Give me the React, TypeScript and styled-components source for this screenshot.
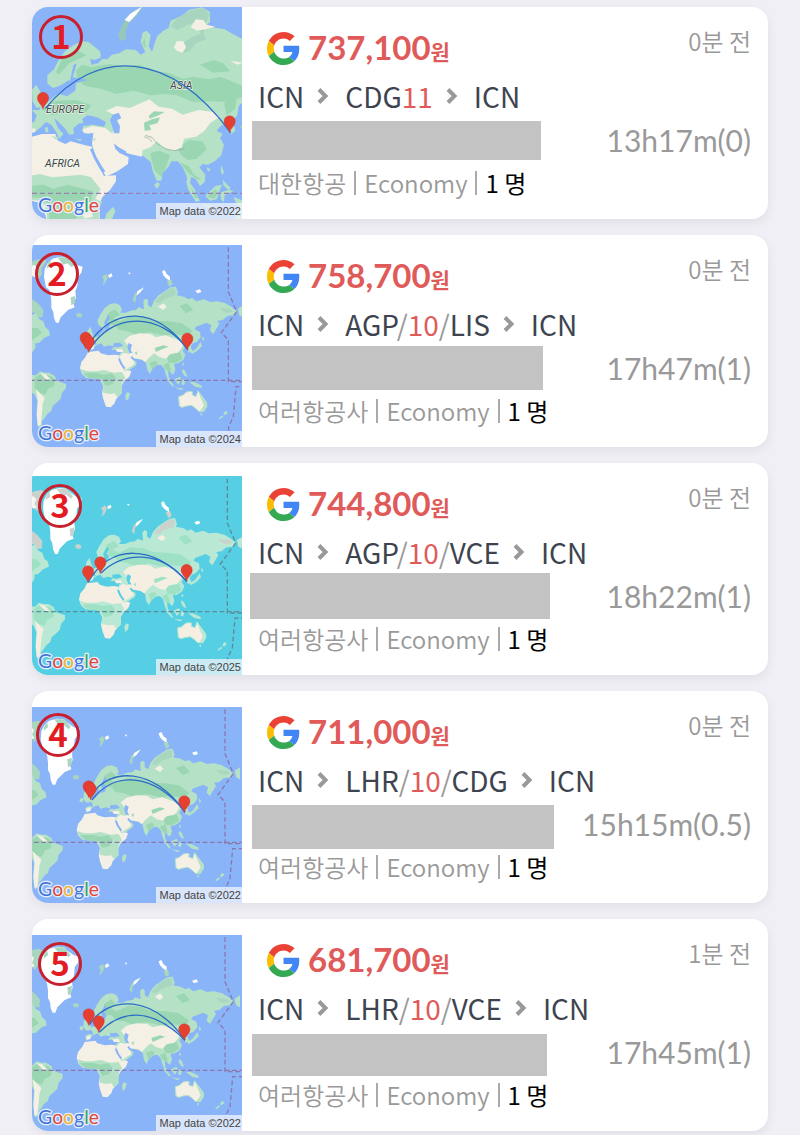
import React from 'react';
import styled, { createGlobalStyle } from 'styled-components';

const GlobalStyle = createGlobalStyle`
  * { box-sizing: border-box; }
  body { margin: 0; background: #f0eff5; font-family: "Noto Sans CJK KR", "Noto Sans", sans-serif; }
  ul { margin: 0; padding: 0; list-style: none; }
`;

const List = styled.ul`
  display: flex;
  flex-direction: column;
  gap: 16px;
  padding: 7px 32px 4px;
`;

const Card = styled.li`
  position: relative;
  display: flex;
  min-height: 212px;
  background: #fff;
  border-radius: 16px;
  overflow: hidden;
  box-shadow: 0 4px 10px rgba(60, 60, 90, 0.08);
`;

const MapFrame = styled.div`
  position: relative;
  flex: none;
  align-self: flex-end;
  width: 210px;
  svg { display: block; width: 100%; }
`;

const Attribution = styled.span`
  position: absolute;
  right: 0;
  bottom: 0;
  padding: 0 1px 0 3px;
  background: rgba(240, 245, 250, 0.76);
  color: #444;
  font: 11px/16px "Liberation Sans", sans-serif;
  white-space: nowrap;
`;

const Badge = styled.span<{ $x: number; $y: number }>`
  position: absolute;
  left: ${p => p.$x}px;
  top: ${p => p.$y}px;
  display: flex;
  align-items: center;
  justify-content: center;
  width: 44px;
  height: 44px;
  padding-bottom: 5px;
  border: 3px solid #c8202f;
  border-radius: 50%;
  color: #e31b23;
  font-size: 33px;
  line-height: 38px;
  font-weight: 700;
`;

const Body = styled.div`
  flex: 1;
  min-width: 0;
  display: flex;
  flex-direction: column;
  padding: 16px 17px 15px 16px;
`;

const Row = styled.div`
  display: flex;
  align-items: center;
  justify-content: space-between;
`;

const PriceRow = styled(Row)`
  height: 50px;
  padding-left: 9px;
`;

const Price = styled.strong`
  display: flex;
  align-items: center;
  gap: 8px;
  color: #e05a5a;
  font: 700 33px/44px Lato, sans-serif;
  svg { width: 33px; height: 33px; }
  small { font: 700 21px/40px "Noto Sans CJK KR", sans-serif; }
`;

const Ago = styled.time`
  align-self: flex-start;
  color: #999;
  font-size: 24px;
  line-height: 36px;
  font-weight: 350;
`;

const Route = styled.div`
  display: flex;
  align-items: center;
  height: 46px;
  color: #3e444f;
  font-size: 28px;
  line-height: 46px;
  white-space: nowrap;
  em { color: #e05a5a; font-style: normal; }
  i { color: #999; font-style: normal; }
  svg { width: 14px; height: 18px; margin: 0 15px 0 12px; }
`;

const DurationRow = styled(Row)`
  height: 47px;
  margin-top: -2px;
  align-items: flex-start;
`;

const Masked = styled.div<{ $w: number; $h: number; $top: number; $shift: number }>`
  width: ${p => p.$w}px;
  height: ${p => p.$h}px;
  margin: ${p => p.$top}px 0 0 -${p => p.$shift}px;
  background: #c3c3c3;
`;

const Duration = styled.span`
  color: #999;
  font: 30px/46px Lato, sans-serif;
`;

const Details = styled.div`
  display: flex;
  align-items: center;
  gap: 8px;
  color: #999;
  font-size: 24px;
  font-weight: 350;
  line-height: 38px;
  white-space: nowrap;
  b { color: #000; font-weight: 400; }
`;

const Divider = styled.span`
  width: 2px;
  height: 24px;
  background: #aaa;
`;

const GoogleG = () => (
  <svg viewBox="0 0 48 48" aria-label="Google">
    <path fill="#EA4335" d="M24 9.5c3.54 0 6.71 1.22 9.21 3.6l6.85-6.85C35.9 2.38 30.47 0 24 0 14.62 0 6.51 5.38 2.56 13.22l7.98 6.19C12.43 13.72 17.74 9.5 24 9.5z" />
    <path fill="#4285F4" d="M46.98 24.55c0-1.57-.15-3.09-.38-4.55H24v9.02h12.94c-.58 2.96-2.26 5.48-4.78 7.18l7.73 6c4.51-4.18 7.09-10.36 7.09-17.65z" />
    <path fill="#FBBC05" d="M10.53 28.59c-.48-1.45-.76-2.99-.76-4.59s.27-3.14.76-4.59l-7.98-6.19C.92 16.46 0 20.12 0 24c0 3.88.92 7.54 2.56 10.78l7.97-6.19z" />
    <path fill="#34A853" d="M24 48c6.48 0 11.93-2.13 15.89-5.81l-7.73-6c-2.15 1.45-4.92 2.3-8.16 2.3-6.26 0-11.57-4.22-13.47-9.91l-7.98 6.19C6.51 42.62 14.62 48 24 48z" />
  </svg>
);

const Chevron = () => (
  <svg viewBox="0 0 14 18" aria-hidden="true">
    <path d="M3 2.500 9.500 9 3 15.500" fill="none" stroke="#999" strokeWidth="4" />
  </svg>
);

type Point = [number, number];

const Pin = ({ at: [x, y] }: { at: Point }) => (
  <path
    transform={`translate(${x} ${y})`}
    fill="#e53f31"
    stroke="#c5372c"
    d="M0 34C-2 20-17 14-17 0A17 17 0 0 1 17 0C17 14 2 20 0 34Z"
  />
);

const Wordmark = ({ y }: { y: number }) => (
  <text
    x="54" y={y} fontFamily="Lato, sans-serif" fontSize="58"
    stroke="#e6edf8" strokeWidth="8" strokeLinejoin="round" paintOrder="stroke"
  >
    <tspan fill="#3f76dd">G</tspan><tspan fill="#de453c">o</tspan><tspan fill="#efb32c">o</tspan>
    <tspan fill="#3f76dd">g</tspan><tspan fill="#3aa05a">l</tspan><tspan fill="#de453c">e</tspan>
  </text>
);

interface Palette { sea: string; land: string; forest: string; desert: string; tundra: string; line: string }

const CLASSIC: Palette = { sea: '#8ab4f8', land: '#b5e2c6', forest: '#9ad6b1', desert: '#f5f0e5', tundra: '#a9d6bf', line: '#8a78ad' };
const TEAL: Palette = { sea: '#56cee3', land: '#b9e8d4', forest: '#9fe1c4', desert: '#f4eee3', tundra: '#cbd2cd', line: '#5b8d98' };

const World = ({ c }: { c: Palette }) => (
  <g strokeLinejoin="round">
    {/* North America */}
    <path fill={c.tundra} d="M30 98 46 90 66 86 80 92 72 106 64 116 66 132 54 150 44 138 30 142Z" />
    <path fill="#f7f6f2" d="M30 112 42 104 52 114 46 128 54 138 44 142 30 132Z" />
    <path fill={c.tundra} d="M30 206 44 212 58 224 70 240 68 262 56 262 46 250 30 246Z" />
    <path fill={c.land} d="M30 256 48 250 58 268 70 274 76 292 86 300 90 316 72 324 58 338 46 340 46 354 30 376Z" />
    <path fill={c.forest} d="M30 294 54 294 66 310 48 322 30 336Z" />
    {/* Greenland */}
    <path fill="#fff" d="M72 142 74 118 84 98 98 86 120 80 142 82 152 92 172 106 188 110 184 128 174 142 172 168 166 184 168 204 160 220 164 232 144 240 132 252 122 262 116 278 108 278 102 264 100 246 94 234 94 212 92 196 88 180 78 172Z" />
    <path fill={c.tundra} d="M112 82 142 82 162 104 156 112 142 100 130 104ZM152 202 166 198 164 220 154 226ZM84 98 92 92 94 106 80 116Z" />
    <path fill={c.tundra} d="M168 252 178 248 188 254 184 262 172 262Z" />
    {/* South America */}
    <path fill={c.land} d="M30 434 48 436 60 424 74 428 88 428 104 438 110 452 138 462 138 474 126 488 122 506 112 516 98 528 94 542 82 552 74 564 66 574 66 584 56 592 52 586 50 544 52 512 44 494 30 482Z" />
    <path fill={c.forest} d="M44 444 60 432 94 438 106 450 102 468 84 476 76 494 58 488 44 474Z" />
    <path fill={c.desert} d="M48 478 60 490 74 504 68 522 66 548 62 584 54 588 50 556 54 514ZM60 430 76 432 92 448 80 450Z" />
    {/* Africa and Madagascar */}
    <path fill={c.desert} d="M204 366 236 362 242 370 264 376 284 374 298 376 310 396 316 418 334 424 328 440 312 454 304 470 304 490 288 508 284 520 272 532 258 530 250 508 246 490 250 468 244 456 236 442 216 442 200 444 186 432 180 414 184 396 196 382Z" />
    <path fill={c.land} d="M182 418 204 424 228 424 252 420 280 428 306 426 316 444 306 460 306 490 292 502 284 490 270 492 248 488 250 468 242 448 200 444 188 434Z" />
    <path fill={c.forest} d="M190 430 226 428 252 434 276 430 288 444 278 462 258 468 244 448 206 444Z" />
    <path fill={c.land} d="M322 486 330 490 326 506 318 512 316 496Z" />
    {/* Eurasia */}
    <path fill={c.land} d="M208 362 206 348 216 342 230 344 226 332 218 328 228 320 236 318 244 308 252 302 248 294 236 286 232 272 240 256 254 234 270 222 286 220 300 226 306 240 300 248 318 248 332 242 348 240 356 232 372 238 370 214 376 206 384 210 384 226 394 232 402 212 416 196 436 182 452 172 468 170 474 188 470 196 492 200 506 208 516 204 530 214 552 208 570 216 592 214 616 220 636 232 652 246 642 256 622 258 608 270 592 272 598 282 588 298 580 312 570 302 574 286 560 278 544 284 528 290 524 298 540 306 542 322 530 336 518 340 512 350 518 364 506 368 504 352 494 350 488 362 496 374 490 390 474 400 462 402 466 418 460 434 450 426 444 418 446 440 456 460 448 458 438 436 432 414 422 404 410 406 396 418 390 432 382 420 378 398 366 390 346 386 334 386 350 396 348 406 328 420 314 424 304 404 296 384 300 370 308 364 292 358 274 360 282 350 268 346 252 350 244 340 232 344 222 352Z" />
    <path fill={c.forest} d="M262 252 284 238 300 254 280 264 300 274 334 258 372 260 400 272 446 274 486 280 518 302 504 318 464 312 430 316 388 306 350 314 322 304 296 300 286 286 264 284ZM440 378 478 364 488 386 466 400 446 398ZM388 398 406 392 414 400 396 418ZM430 404 446 398 454 424 438 420ZM478 228 502 220 520 240 498 250Z" />
    <path fill={c.tundra} d="M404 216 428 190 454 174 466 176 466 196 436 206 418 220ZM596 234 630 236 640 246 616 248Z" />
    <path fill={c.desert} d="M312 332 328 318 358 310 392 312 408 322 436 316 464 326 490 336 486 352 474 368 450 372 438 386 420 382 402 370 386 384 376 396 364 388 338 384 344 402 316 420 304 398 298 380 310 368 330 372 326 348ZM414 230 430 220 440 230 430 240ZM286 358 306 356 310 366 292 366ZM208 350 222 346 222 356 212 360Z" />
    <path fill={c.sea} d="M264 256 270 262 262 276 270 286 264 300 252 302 256 286 252 278ZM326 338 336 344 332 360 338 370 328 368 322 352ZM280 340 300 338 310 348 292 352 280 350ZM242 344 252 352 260 366 252 368 238 354Z" />
    <path fill="none" stroke={c.sea} strokeWidth="6" d="M297 386 304 402 314 416M334 380 342 390" />
    <path fill={c.forest} d="M404 354 430 346 446 350 426 358 408 366ZM344 368 352 364 350 376Z" />
    <path fill={c.land} d="M206 330 200 318 202 302 212 290 216 306 224 324 216 332ZM192 318 202 320 196 332 188 328Z" />
    {/* Arctic islands */}
    <path fill={c.tundra} d="M246 140 258 132 264 142 256 158 248 166 252 150ZM338 210 344 192 356 180 372 174 360 186 348 200 346 218ZM440 152 454 150 458 164 448 170Z" />
    <path fill="#fff" d="M264 136 274 130 278 138 268 144ZM426 124 434 120 440 132 450 140 450 152 440 146 430 136ZM352 184 372 172 360 188 350 196ZM526 182 540 178 544 186 532 190ZM324 128 332 128 328 134Z" />
    {/* East Asia, Indonesia, Oceania */}
    <path fill={c.land} d="M546 318 554 328 548 332ZM542 336 546 348 532 362 516 372 512 366 528 356ZM578 288 584 300 578 310ZM488 396 494 404 488 408ZM488 416 496 424 502 440 494 438 486 426ZM440 446 456 458 464 470 456 468ZM464 448 480 440 484 450 474 464ZM488 450 498 448 492 466 484 462ZM464 472 492 476 482 480ZM508 456 522 456 544 466 546 474 526 470Z" />
    <path fill={c.desert} stroke={c.land} strokeWidth="3" d="M476 500 488 496 500 486 510 484 518 486 516 494 528 500 534 482 542 494 550 504 560 518 560 530 550 544 536 544 526 534 514 526 500 528 486 532 478 528Z" />
    <path fill={c.land} d="M534 484 544 498 558 514 562 528 552 546 540 544 552 526 544 508ZM540 550 548 550 544 558ZM616 542 624 548 614 556 610 552ZM608 556 610 560 598 568 596 564ZM654 236 670 226 670 262 658 256Z" />
    {/* Equator and date line */}
    <g fill="none" stroke={c.line} strokeWidth="4" strokeDasharray="14 8">
      <path d="M30 451H680" />
      <path d="M625 30V185L650 245 604 308 625 330V455H680M680 470H648L640 560 626 590V612" />
    </g>
  </g>
);

const EurasiaCloseUp = () => {
  const c = CLASSIC;
  return (
    <g strokeLinejoin="round">
      <rect x="30" y="10" width="650" height="660" fill={c.sea} />
      {/* Europe and Asia */}
      <path fill={c.land} d="M30 372 44 364 50 346 36 330 58 330 66 314 88 302 104 288 122 278 150 272 158 250 146 240 132 250 118 258 98 264 82 250 82 226 102 208 114 184 136 152 160 136 186 124 206 126 240 154 244 172 224 180 210 176 214 194 234 190 248 176 262 178 276 164 298 160 318 148 348 150 362 164 376 156 362 126 368 98 380 92 392 106 386 138 396 156 404 130 412 108 430 92 446 84 452 62 488 46 506 30 546 22 570 36 570 66 556 78 590 84 614 88 634 100 670 118V304L656 318 652 346 638 362 646 392 634 402 624 388 620 370 602 378 590 392 608 402 600 414 612 434 604 466 584 484 564 494 548 492 538 502 556 524 554 546 540 558 528 538 514 530 510 548 524 568 534 596 518 582 502 552 500 528 488 502 474 484 454 484 446 500 428 518 424 542 410 542 398 512 392 486 380 476 362 462 340 460 310 454 294 438 280 424 260 400 236 396 204 402 186 394 190 378 206 370 178 370 160 384 162 402 148 404 134 384 116 366 102 354 114 384 130 402 118 416 110 398 94 374 78 366 60 384 44 396 30 400Z" />
      <path fill={c.forest} d="M168 212 186 194 216 202 244 196 270 192 312 200 360 194 400 214 446 218 488 236 520 230 566 238 602 230 670 258V290L622 306 578 304 520 306 470 286 430 282 392 286 340 272 288 282 242 266 196 258 172 238ZM386 94 374 112 378 146 366 130ZM540 194 580 180 610 190 630 214 578 218ZM472 444 506 420 548 424 560 448 530 476 504 480 484 466ZM390 460 418 452 450 466 438 500 424 530 404 512ZM480 488 506 498 522 524 546 538 530 538 506 520ZM128 172 168 150 200 166 176 176 150 188 116 224 108 216ZM64 326 108 302 168 300 214 316 196 338 150 336 96 346ZM612 310 650 290 646 326 620 346Z" />
      <path fill="#a7d5bf" d="M452 78 470 56 506 34 548 24 570 42 556 70 526 66 500 76 470 90ZM488 130 516 112 548 98 560 116 528 130 508 154 486 160ZM536 92 556 82 548 106Z" />
      <path fill={c.desert} d="M512 82 528 58 550 60 560 74 586 80 556 88 532 92ZM462 142 470 124 490 124 498 142 488 158 470 152ZM258 332 290 318 330 324 356 312 388 298 416 320 456 326 488 344 536 330 580 336 600 350 570 370 552 394 528 410 492 416 486 442 460 452 430 442 410 424 392 442 368 450 366 470 330 462 296 452 278 430 240 398 192 400 188 388 218 378 256 384 278 402 280 372 302 354ZM30 396 40 384 48 388 42 398ZM630 182 670 188 652 194Z" />
      <path fill={c.forest} d="M386 348 402 334 434 336 416 346 390 356ZM372 368 396 358 420 352 412 370 388 376 394 390 374 392Z" />
      <path fill="none" stroke="#8fa99b" strokeWidth="2" d="M376 406 396 412 412 432 440 448 466 452 494 446M372 410 388 416 396 426" />
      {/* Africa */}
      <path fill={c.desert} d="M30 412 66 402 106 402 114 422 136 432 152 424 190 434 216 440 222 470 236 500 252 528 288 526 288 544 270 570 248 590 238 612 240 670H84L72 634 60 608 30 602Z" />
      <path fill={c.land} d="M30 528 60 522 96 532 142 528 182 524 214 532 242 568 226 596 246 606 236 626 240 670H84L76 618 58 602 30 600Z" />
      <path fill={c.forest} d="M30 558 70 554 100 566 142 554 190 566 218 574 212 606 178 612 166 670H90L84 610 56 592 30 594ZM218 612 238 608 236 640 218 644Z" />
      <path fill={c.desert} d="M180 604 202 600 216 620 218 650 194 656 180 630Z" />
      <path fill={c.land} d="M280 620 286 634 270 670H250L260 640Z" />
      {/* Arabia */}
      <path fill={c.desert} d="M220 400 250 390 276 408 284 438 298 458 326 472 324 492 292 514 258 530 244 504 226 470 216 432Z" />
      {/* Inner seas */}
      <path fill={c.sea} d="M160 196 170 190 164 214 158 232 186 236 204 240 182 246 168 250 166 272 142 288 122 284 132 262 148 252ZM186 358 202 346 216 348 236 354 258 366 252 380 218 374 194 378ZM278 344 296 338 304 354 290 360 300 378 298 400 282 400 276 378 270 360ZM282 430 296 442 318 454 320 462 300 460 286 446ZM240 168 258 158 262 174 248 178Z" />
      <path fill="none" stroke={c.sea} strokeWidth="9" d="M214 446 226 474 240 498 252 516" />
      <path fill={c.land} d="M50 324 38 304 36 270 48 254 62 276 68 302 72 318ZM74 384 82 380 86 394 78 398ZM94 408 116 412 110 420ZM164 416 186 418 180 422ZM216 418 228 414 224 422Z" />
      {/* Arctic and island chains */}
      <path fill="#96c7bb" d="M294 104 306 76 320 52 340 34 368 20 350 48 326 70 318 92 318 116 302 124Z" />
      <path fill="#fff" d="M314 60 330 42 366 20 350 42 328 66Z" />
      <path fill={c.land} d="M412 546 420 552 412 566 402 556ZM498 540 520 570 540 602 528 606 504 568ZM556 588 570 574 586 558 606 554 598 574 590 598 570 602ZM600 578 624 570 642 572 614 586 612 606 604 600ZM604 496 612 516 606 526 602 510ZM608 540 632 564 626 570 610 556ZM540 610 582 618 564 624ZM640 590 670 602V630L650 612ZM656 620 666 624V660H644ZM560 502 572 508 564 516Z" />
      <path fill={c.forest} d="M560 590 586 568 594 580 584 596ZM512 560 534 594 524 594ZM658 380 670 376V388Z" />
      <path fill="none" stroke="#9b7fae" strokeWidth="4" strokeDasharray="15 9" d="M36 580H680" />
      <g fontFamily="Roboto, sans-serif" fontStyle="italic" fontSize="32" fill="#444" stroke="#eef5ee" strokeWidth="4" paintOrder="stroke">
        <text x="450" y="267">ASIA</text>
        <text x="78" y="338">EUROPE</text>
        <text x="75" y="502">AFRICA</text>
      </g>
    </g>
  );
};

interface Trip {
  top: number;
  height: number;
  world?: { palette: Palette; shift: Point };
  arcs: string[];
  pins: Point[];
  badge: Point;
  year: number;
  price: string;
  ago: string;
  via: [string, string, string?];
  mask: [width: number, height: number, top: number, shift: number];
  duration: string;
  airline: string;
}

const TRIPS: Trip[] = [
  {
    top: 21, height: 636, arcs: ['M76 325C230 140 450 150 632 398'], pins: [[69, 294], [629, 364]],
    badge: [7, 8], year: 2022, price: '737,100', ago: '0분 전', via: ['CDG', '11'], mask: [289, 39, 4, 6],
    duration: '13h17m(0)', airline: '대한항공',
  },
  {
    top: 45, height: 606, world: { palette: CLASSIC, shift: [0, 0] },
    arcs: ['M205 345C280 225 410 230 503 358', 'M208 360C275 245 420 245 503 358'],
    pins: [[197, 323], [206, 334], [502, 326]],
    badge: [3, 17], year: 2024, price: '758,700', ago: '0분 전', via: ['AGP', '10', 'LIS'], mask: [291, 44, 1, 6],
    duration: '17h47m(1)', airline: '여러항공사',
  },
  {
    top: 54, height: 597, world: { palette: TEAL, shift: [-3, 10] },
    arcs: ['M205 372C270 255 400 260 500 370', 'M243 345C310 280 420 275 500 370'],
    pins: [[204, 340], [241, 313], [500, 336]],
    badge: [6, 21], year: 2025, price: '744,800', ago: '0분 전', via: ['AGP', '10', 'VCE'], mask: [300, 46, 0, 8],
    duration: '18h22m(1)', airline: '여러항공사',
  },
  {
    top: 63, height: 588, world: { palette: CLASSIC, shift: [-10, 18] },
    arcs: ['M212 330C270 240 400 245 495 378', 'M216 342C280 255 400 258 495 378'],
    pins: [[206, 301], [212, 308], [493, 346]],
    badge: [4, 22], year: 2022, price: '711,000', ago: '0분 전', via: ['LHR', '10', 'CDG'], mask: [302, 44, 4, 6],
    duration: '15h15m(0.5)', airline: '여러항공사',
  },
  {
    top: 63, height: 588, world: { palette: CLASSIC, shift: [-10, 18] },
    arcs: ['M208 332C270 240 400 245 495 378', 'M238 355C300 290 390 275 495 378'],
    pins: [[206, 301], [236, 322], [493, 346]],
    badge: [6, 23], year: 2022, price: '681,700', ago: '1분 전', via: ['LHR', '10', 'VCE'], mask: [295, 42, 5, 6],
    duration: '17h45m(1)', airline: '여러항공사',
  },
];

const RouteMap = ({ trip }: { trip: Trip }) => (
  <MapFrame>
    <svg viewBox={`36 ${trip.top} 630 ${trip.height}`} role="img" aria-label="Route map">
      {trip.world ? (
        <>
          <rect x="30" y="20" width="650" height="650" fill={trip.world.palette.sea} />
          <g transform={`translate(${trip.world.shift.join(' ')})`}><World c={trip.world.palette} /></g>
        </>
      ) : <EurasiaCloseUp />}
      {trip.arcs.map(d => <path key={d} d={d} fill="none" stroke="#2b6cc9" strokeWidth="4" />)}
      {trip.pins.map(p => <Pin key={p.join()} at={p} />)}
      <Wordmark y={trip.top + trip.height - 21} />
    </svg>
    <Attribution>Map data ©{trip.year}</Attribution>
  </MapFrame>
);

const TripCard = ({ trip, index }: { trip: Trip; index: number }) => {
  const [from, days, back] = trip.via;
  const [w, h, top, shift] = trip.mask;
  return (
    <Card>
      <RouteMap trip={trip} />
      <Badge $x={trip.badge[0]} $y={trip.badge[1]}>{index + 1}</Badge>
      <Body>
        <PriceRow>
          <Price><GoogleG /><span>{trip.price}<small>원</small></span></Price>
          <Ago>{trip.ago}</Ago>
        </PriceRow>
        <Route>
          ICN<Chevron />
          <span>{from}{back && <i>/</i>}<em>{days}</em>{back && <><i>/</i>{back}</>}</span>
          <Chevron />ICN
        </Route>
        <DurationRow>
          <Masked $w={w} $h={h} $top={top} $shift={shift} />
          <Duration>{trip.duration}</Duration>
        </DurationRow>
        <Details>
          <span>{trip.airline}</span><Divider /><span>Economy</span><Divider /><b>1 명</b>
        </Details>
      </Body>
    </Card>
  );
};

export default function App() {
  return (
    <>
      <GlobalStyle />
      <List>
        {TRIPS.map((trip, i) => <TripCard key={trip.price} trip={trip} index={i} />)}
      </List>
    </>
  );
}
